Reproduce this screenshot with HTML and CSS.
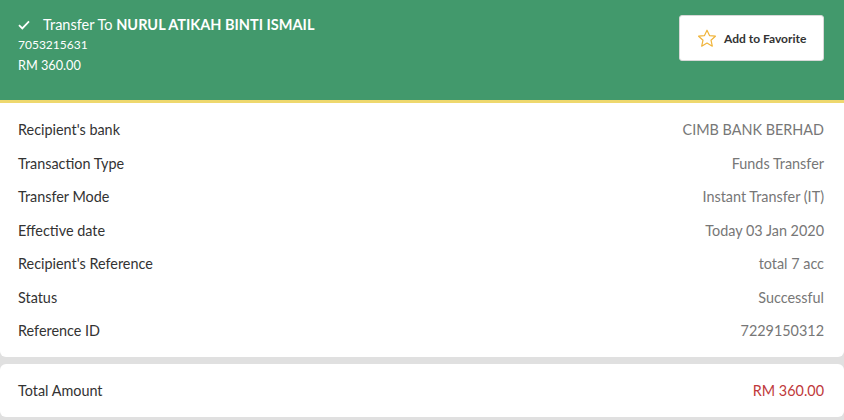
FILE: index.html
```html
<!DOCTYPE html>
<html>
<head>
<meta charset="utf-8">
<link rel="stylesheet" href="styles.css">
</head>
<body>
<div class="receipt">
  <header class="hero">
    <div class="hero-info">
      <div class="hero-title">
        <svg class="check" width="12" height="10" viewBox="0 0 12 10"><path d="M1 5.2 L4.3 8.4 L11 1.4" fill="none" stroke="#fff" stroke-width="1.8"/></svg>
        <span>Transfer To <b>NURUL ATIKAH BINTI ISMAIL</b></span>
      </div>
      <div class="hero-acc">7053215631</div>
      <div class="hero-amt">RM 360.00</div>
    </div>
    <button class="fav">
      <svg width="20" height="19" viewBox="0 0 20 19"><path d="M10 1.2 L12.5 6.6 L18.4 7.2 L14 11.2 L15.3 17.2 L10 14.1 L4.7 17.2 L6 11.2 L1.6 7.2 L7.5 6.6 Z" fill="none" stroke="#f0b43a" stroke-width="1.2" stroke-linejoin="round"/></svg>
      <span>Add to Favorite</span>
    </button>
  </header>
  <section class="card details">
    <div class="row"><span class="label">Recipient's bank</span><span class="value">CIMB BANK BERHAD</span></div>
    <div class="row"><span class="label">Transaction Type</span><span class="value">Funds Transfer</span></div>
    <div class="row"><span class="label">Transfer Mode</span><span class="value">Instant Transfer (IT)</span></div>
    <div class="row"><span class="label">Effective date</span><span class="value">Today 03 Jan 2020</span></div>
    <div class="row"><span class="label">Recipient's Reference</span><span class="value">total 7 acc</span></div>
    <div class="row"><span class="label">Status</span><span class="value">Successful</span></div>
    <div class="row"><span class="label">Reference ID</span><span class="value">7229150312</span></div>
  </section>
  <section class="card total">
    <span class="label">Total Amount</span>
    <span class="amount">RM 360.00</span>
  </section>
</div>
</body>
</html>
```
FILE: styles.css
```css
* { box-sizing: border-box; }
html, body { margin: 0; padding: 0; }
body {
  background: #e0e0e0;
  font-family: Lato, "Open Sans", sans-serif;
  width: 844px;
  height: 420px;
  overflow: hidden;
}
.receipt { display: flex; flex-direction: column; }
.hero {
  background: #42996c;
  height: 103px;
  border-bottom: 3px solid #eed86e;
  display: flex;
  justify-content: space-between;
  align-items: flex-start;
  padding: 15px 20px 0 18px;
  color: #fff;
}
.hero-title {
  display: flex;
  align-items: center;
  font-size: 14.5px;
  line-height: 19px;
}
.hero-title b { font-weight: 700; }
.check { margin: 0 13px 0 0; }
.hero-acc { font-size: 12px; line-height: 16px; margin-top: 3px; }
.hero-amt { font-size: 12.7px; line-height: 16px; margin-top: 4px; }
.fav {
  margin-top: 0;
  width: 145px;
  height: 46px;
  background: #fff;
  border: 1px solid #d8d8d8;
  border-radius: 3px;
  display: flex;
  align-items: center;
  padding: 0 0 0 17px;
  gap: 7px;
  font-family: Lato, sans-serif;
  font-size: 12px;
  font-weight: 700;
  color: #333;
}
.card {
  background: #fff;
  border-radius: 0 0 6px 6px;
}
.details {
  padding: 10px 20px 10px 18px;
  height: 254px;
}
.row {
  display: flex;
  justify-content: space-between;
  align-items: center;
  height: 33.5px;
  font-size: 14.4px;
}
.label { color: #333; }
.value { color: #777; }
.total {
  margin-top: 7px;
  border-radius: 6px;
  height: 53px;
  display: flex;
  justify-content: space-between;
  align-items: center;
  padding: 0 20px 0 18px;
  font-size: 14.4px;
}
.amount { color: #c0393b; }
```
